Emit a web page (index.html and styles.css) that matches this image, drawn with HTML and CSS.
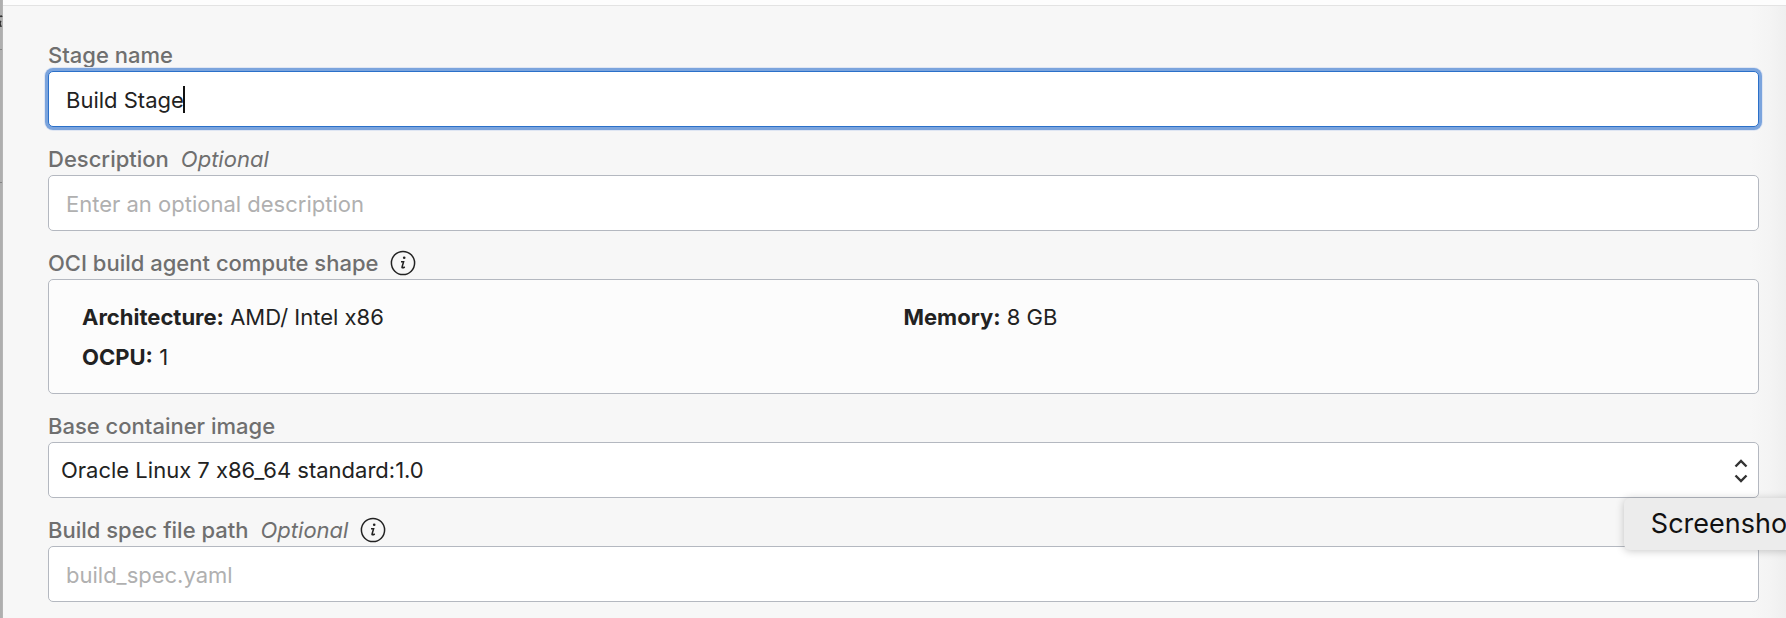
FILE: index.html
```html
<!DOCTYPE html>
<html lang="en">
<head>
<meta charset="utf-8">
<title>Build Stage</title>
<link rel="stylesheet" href="styles.css">
</head>
<body>
<div class="backdrop" aria-hidden="true"><svg class="backdrop-marks" viewBox="0 0 3 190"><path d="M0 17Q1 15 2 17M1 21Q0 22 0 24Q1 26 1 27" fill="none" stroke="#333" stroke-width="1.6"/><path d="M0 49.500H2M0 182.500H2" stroke="#858585"/></svg></div>
<main class="panel">
  <div class="panel-header"></div>
  <form class="form">
    <div class="field">
      <div class="label-row"><label for="stage">Stage name</label></div>
      <div class="control-wrap">
        <input class="control focused" id="stage" type="text" value="Build Stage">
        <span class="caret"></span>
      </div>
    </div>
    <div class="field">
      <div class="label-row"><label for="desc">Description</label><em class="optional">Optional</em></div>
      <input class="control" id="desc" type="text" placeholder="Enter an optional description">
    </div>
    <section class="field">
      <div class="label-row"><span>OCI build agent compute shape</span>
        <button class="info" type="button" aria-label="About compute shape"><svg viewBox="0 0 26 26"><circle cx="13" cy="13" r="11.600"/><circle class="dot" cx="14.200" cy="7.800" r="1.300"/><path d="M11 11.700H13.600L12 17.200Q11.900 18.600 14.800 17"/></svg></button>
      </div>
      <div class="shape-box">
        <div><b>Architecture:</b> AMD/ Intel x86</div>
        <div><b>Memory:</b> 8 GB</div>
        <div><b>OCPU:</b> 1</div>
      </div>
    </section>
    <div class="field">
      <div class="label-row"><label for="image">Base container image</label></div>
      <div class="control-wrap">
        <select class="control select" id="image"><option>Oracle Linux 7 x86_64 standard:1.0</option></select>
        <svg class="chevrons" viewBox="0 0 14 24"><path d="M1.500 7.500L7 2L12.500 7.500M1.500 16.500L7 22L12.500 16.500"/></svg>
      </div>
    </div>
    <div class="field">
      <div class="label-row"><label for="spec">Build spec file path</label><em class="optional">Optional</em>
        <button class="info" type="button" aria-label="About build spec file path"><svg viewBox="0 0 26 26"><circle cx="13" cy="13" r="11.600"/><circle class="dot" cx="14.200" cy="7.800" r="1.300"/><path d="M11 11.700H13.600L12 17.200Q11.900 18.600 14.800 17"/></svg></button>
      </div>
      <input class="control" id="spec" type="text" placeholder="build_spec.yaml">
    </div>
  </form>
  <div class="tooltip" role="tooltip">Screenshot</div>
</main>
</body>
</html>
```

FILE: styles.css
```css
* { box-sizing: border-box; }
body {
  margin: 0;
  min-height: 100vh;
  display: flex;
  overflow: hidden;
  font: 22px/24px Inter, "Liberation Sans", sans-serif;
  color: #222;
}
.backdrop { width: 3px; flex: none; background: #afafaf; border-right: 1px solid #b5b5b5; }
.backdrop-marks { display: block; width: 3px; height: 190px; }
.panel {
  position: relative;
  flex: 1;
  min-width: 0;
  overflow: hidden;
  background: linear-gradient(to left, #efefef, #f4f4f4 16px, #f7f7f7 36px);
}
.panel-header { height: 6px; background: #fdfdfd; border-bottom: 1px solid #e3e3e3; }
.form { display: flex; flex-direction: column; gap: 20px; padding: 37px 27px 16px 45px; }
.field { display: flex; flex-direction: column; gap: 4px; }
.label-row { display: flex; align-items: center; gap: 12px; height: 24px; font-weight: 500; color: #6f6f6f; }
.optional { font-weight: 400; }
.control-wrap { position: relative; display: flex; }
.control {
  width: 100%;
  height: 56px;
  padding: 2px 17px 0;
  border: 1px solid #b4b8c0;
  border-radius: 5px;
  background: #fff;
  font: inherit;
  color: #222;
  outline: none;
}
.control::placeholder { color: #b0b0b0; opacity: 1; }
.focused { border-color: #2b70c9; box-shadow: 0 0 0 3px #7ba4dd, 0 0 0 4px #dfe6f3; }
.caret { position: absolute; left: 135px; top: 15px; width: 2px; height: 27px; background: #111; }
.select { appearance: none; padding: 0 48px 0 12px; font-variant-ligatures: no-contextual; }
.chevrons { position: absolute; right: 11px; top: 17px; width: 14px; height: 24px; fill: none; stroke: #333; stroke-width: 2.4; pointer-events: none; }
.info { display: flex; width: 26px; height: 26px; padding: 0; border: 0; background: none; }
.info svg { width: 26px; height: 26px; fill: none; stroke: #222; stroke-width: 1.5; }
.info .dot { fill: #222; stroke: none; }
.shape-box {
  display: grid;
  grid-template-columns: 1fr 1fr;
  gap: 16px 0;
  padding: 25px 33px 24px;
  border: 1px solid #b4b8c0;
  border-radius: 5px;
  background: #fcfcfc;
}
.shape-box b { font-weight: 700; }
.tooltip {
  position: absolute;
  right: -37px;
  top: 498px;
  padding: 10px 27px;
  border-radius: 6px;
  background: #ececec;
  box-shadow: 0 1px 8px rgba(0, 0, 0, .22);
  font-size: 27px;
  line-height: 32px;
  white-space: nowrap;
  color: #111;
}
```
